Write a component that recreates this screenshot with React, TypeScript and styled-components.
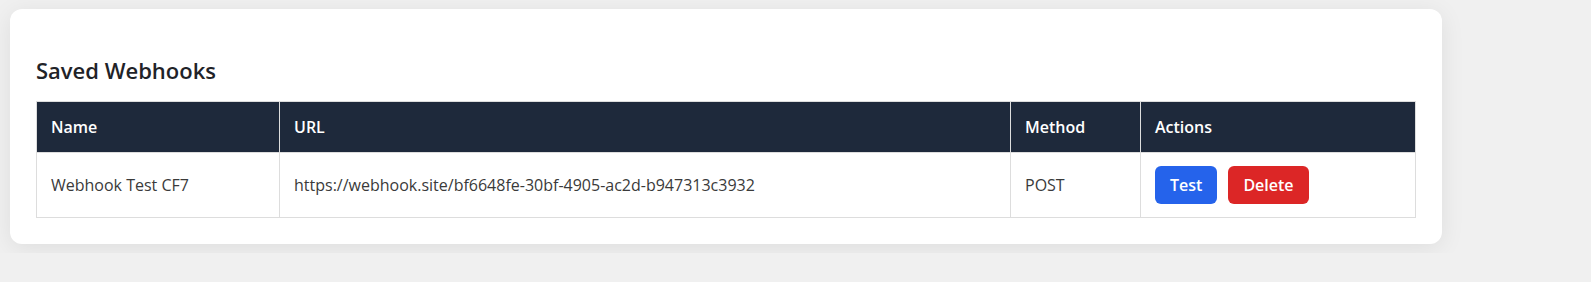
import React from "react";
import styled, { createGlobalStyle } from "styled-components";

const GlobalStyle = createGlobalStyle`
  html, body {
    margin: 0;
    padding: 0;
    background: #f0f0f0;
    font-family: "Open Sans", "Noto Sans", Arial, sans-serif;
  }
  body {
    padding: 9px 10px;
  }
`;

interface Webhook {
  name: string;
  url: string;
  method: string;
}

const webhooks: Webhook[] = [
  {
    name: "Webhook Test CF7",
    url: "https://webhook.site/bf6648fe-30bf-4905-ac2d-b947313c3932",
    method: "POST",
  },
];

const Card = styled.section`
  width: 1432px;
  box-sizing: border-box;
  background: #fff;
  border-radius: 12px;
  padding: 26px;
  box-shadow: 0 4px 24px rgba(0, 0, 0, 0.08);
`;

const Title = styled.h2`
  margin: 20px 0 16px;
  font-size: 22px;
  line-height: 30px;
  font-weight: 600;
  color: #1f2328;
`;

const Table = styled.table`
  width: 100%;
  border-collapse: collapse;
  table-layout: fixed;
  font-size: 16px;
`;

const Col = styled.col<{ $w?: number }>`
  width: ${(p) => (p.$w ? `${p.$w}px` : "auto")};
`;

const Th = styled.th`
  background: #1e293b;
  color: #fff;
  text-align: left;
  font-weight: 600;
  padding: 14px 14px;
  line-height: 22px;
  border: 1px solid #dddddd;
`;

const Td = styled.td`
  padding: 13px 14px;
  line-height: 22px;
  color: #3a3a3a;
  border: 1px solid #dddddd;
  white-space: nowrap;
`;

const Actions = styled.div`
  display: flex;
  gap: 11px;
`;

const Button = styled.button<{ $variant: "primary" | "danger" }>`
  height: 38px;
  padding: 0 15px;
  border: none;
  border-radius: 6px;
  font-family: inherit;
  font-size: 16px;
  font-weight: 600;
  color: #fff;
  cursor: pointer;
  background: ${(p) => (p.$variant === "primary" ? "#2563eb" : "#dc2626")};
`;

export default function App() {
  return (
    <>
      <GlobalStyle />
      <Card>
        <Title>Saved Webhooks</Title>
        <Table>
          <colgroup>
            <Col $w={243} />
            <Col $w={731} />
            <Col $w={130} />
            <Col />
          </colgroup>
          <thead>
            <tr>
              <Th>Name</Th>
              <Th>URL</Th>
              <Th>Method</Th>
              <Th>Actions</Th>
            </tr>
          </thead>
          <tbody>
            {webhooks.map((w) => (
              <tr key={w.url}>
                <Td>{w.name}</Td>
                <Td>{w.url}</Td>
                <Td>{w.method}</Td>
                <Td>
                  <Actions>
                    <Button $variant="primary">Test</Button>
                    <Button $variant="danger">Delete</Button>
                  </Actions>
                </Td>
              </tr>
            ))}
          </tbody>
        </Table>
      </Card>
    </>
  );
}
